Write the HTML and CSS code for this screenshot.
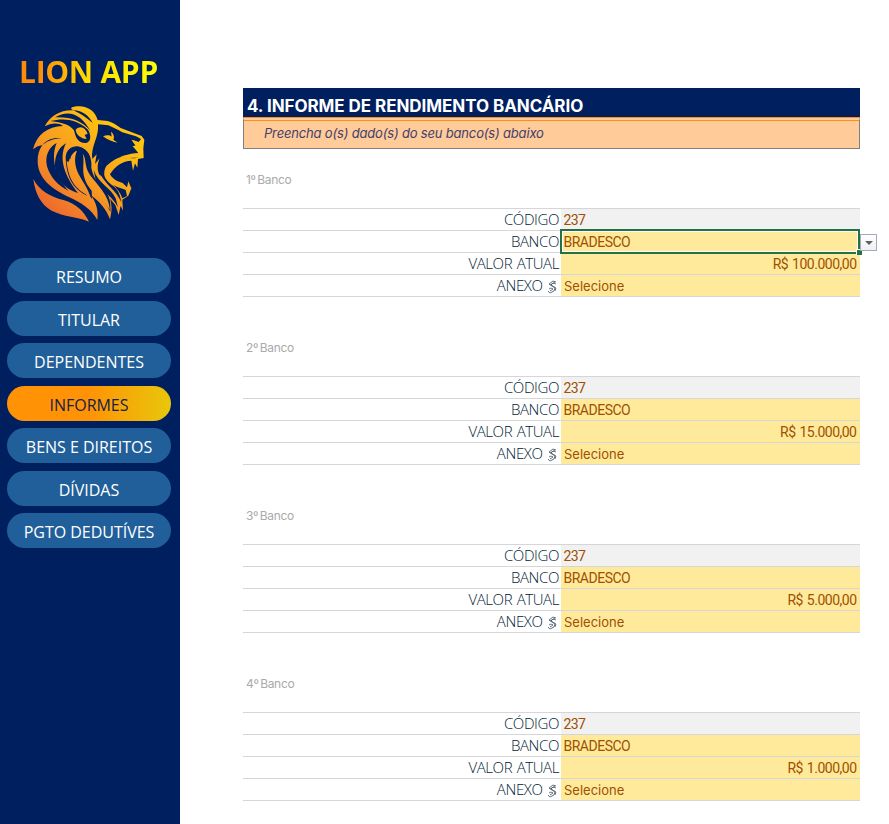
FILE: index.html
```html
<!DOCTYPE html>
<html lang="pt-BR">
<head>
<meta charset="utf-8">
<title>Lion App</title>
<link rel="stylesheet" href="styles.css">
</head>
<body>
<aside class="sidebar">
  <div class="brand">LION APP</div>
  <svg class="lion" viewBox="0 0 420 420" aria-hidden="true">
    <defs>
      <linearGradient id="gold" gradientUnits="userSpaceOnUse" x1="70" y1="350" x2="290" y2="110">
        <stop offset="0" stop-color="#ed6530"/><stop offset=".5" stop-color="#f79b22"/><stop offset="1" stop-color="#ffc20e"/>
      </linearGradient>
    </defs>
    <g fill="url(#gold)">
      <path d="M74 94C91 62 122 44 161 46C142 38 163 33 181 34C210 37 226 52 233 75L263 78C278 82 288 89 302 99L365 123L373 134L370 160L371 189L354 192L352 218L345 205L339 227L334 197C308 197 285 213 270 238C278 252 290 259 308 264L321 277L325 259L334 280L325 302L307 314L309 347L302 332L296 360L286 330L270 311C277 334 275 352 270 373C260 346 240 320 213 301C230 325 235 348 232 375C214 342 182 323 148 307C94 282 55 250 53 202C52 181 57 164 67 150Q50 153 39 163C50 119 83 94 129 93C112 81 91 86 74 94Z"/>
      <path d="M40 252C58 288 92 305 130 315C169 326 191 348 207 380C174 365 132 366 95 347C64 330 45 296 40 252Z"/>
    </g>
    <g fill="#001f5f">
      <path d="M105 67C145 43 183 56 211 107C187 78 152 65 105 67Z"/>
      <path d="M160 46C188 47 207 62 218 84C198 66 180 56 160 46Z"/>
      <path d="M91 78C129 69 170 71 204 104C216 125 211 141 198 144C174 145 167 128 162 106C148 87 119 81 91 78Z"/>
      <path d="M66 151C82 132 103 127 124 130C95 132 80 140 66 151Z"/>
      <path d="M110 144C86 156 74 184 81 214C90 247 117 274 145 287C107 244 91 189 110 144Z"/>
      <path d="M138 145C102 166 97 216 116 250C127 272 150 288 174 294C137 247 113 193 138 145Z"/>
      <path d="M137 187C139 163 155 153 173 154C205 160 217 187 214 219C220 249 235 266 252 282C270 302 273 326 271 350C259 324 235 308 215 284L216 312L204 295C194 277 178 264 170 246C150 216 158 202 149 190C143 214 150 230 159 245C171 268 190 285 201 302C169 286 139 260 137 187Z"/>
      <path d="M234 88L265 91L295 105L307 112L348 124L363 132L356 142L339 135L347 151L340 154L355 174C329 176 292 182 259 213C253 222 251 234 254 248L238 239C229 221 234 202 239 190L225 207L230 178L217 192C211 155 238 127 234 88Z"/>
      <path d="M247 210C245 236 256 257 280 273C294 284 301 300 304 322C290 287 254 266 241 237Z"/>
      <path d="M221 225C234 264 273 279 287 310L294 337C280 309 246 287 227 256Z"/>
      <path d="M290 188Q326 180 366 183L345 190Q317 187 298 192Z"/>
      <path d="M280 270C294 279 309 280 317 285L321 303L307 310C302 294 292 282 280 270Z"/>
    </g>
    <g fill="url(#gold)">
      <path d="M167 104C180 91 196 96 203 116L194 120L200 132C183 130 169 121 167 104Z"/>
      <path d="M140 198C145 204 150 199 153 184C160 172 165 168 171 167C161 190 165 215 176 238C188 260 203 281 211 304C180 292 145 266 140 198Z"/>
      <path d="M188 176C200 190 192 214 210 240C232 271 266 298 270 345C243 309 207 290 195 254C184 222 195 200 188 176Z"/>
      <path d="M249 124C260 119 269 120 275 125L273 110C283 118 283 128 280 134L293 143C277 140 261 134 249 124Z"/>
      <path d="M334 134L355 141L368 132L369 159L357 174L337 153L348 154Z"/>
      <path d="M257 226C269 201 292 184 332 179L364 181L369 188L343 188C303 187 278 204 264 238Z"/>
    </g>
  </svg>
  <nav class="menu">
    <a>RESUMO</a>
    <a>TITULAR</a>
    <a>DEPENDENTES</a>
    <a class="active">INFORMES</a>
    <a>BENS E DIREITOS</a>
    <a>DÍVIDAS</a>
    <a>PGTO DEDUTÍVES</a>
  </nav>
</aside>
<main class="sheet">
  <h1><span class="title">4. INFORME DE RENDIMENTO BANCÁRIO</span></h1>
  <p class="hint"><span>Preencha o(s) dado(s) do seu banco(s) abaixo</span></p>

  <section class="bank">
    <h2>1º Banco</h2>
    <dl>
      <dt>CÓDIGO</dt><dd class="code">237</dd>
      <dt>BANCO</dt><dd class="name selected">BRADESCO<i class="handle"></i><b class="dropdown"></b></dd>
      <dt>VALOR ATUAL</dt><dd class="money">R$ 100.000,00</dd>
      <dt>ANEXO <svg class="clip" viewBox="0 0 10 14"><path d="M9 2 6 1 2 4 8 8 7 11 3 13 1 11M9 4 6 3 4 5 9 8 8 11M2 9 4 8 6 9 3 11M8 2 3 5"/></svg></dt><dd class="pick">Selecione</dd>
    </dl>
  </section>

  <section class="bank">
    <h2>2º Banco</h2>
    <dl>
      <dt>CÓDIGO</dt><dd class="code">237</dd>
      <dt>BANCO</dt><dd class="name">BRADESCO</dd>
      <dt>VALOR ATUAL</dt><dd class="money">R$ 15.000,00</dd>
      <dt>ANEXO <svg class="clip" viewBox="0 0 10 14"><path d="M9 2 6 1 2 4 8 8 7 11 3 13 1 11M9 4 6 3 4 5 9 8 8 11M2 9 4 8 6 9 3 11M8 2 3 5"/></svg></dt><dd class="pick">Selecione</dd>
    </dl>
  </section>

  <section class="bank">
    <h2>3º Banco</h2>
    <dl>
      <dt>CÓDIGO</dt><dd class="code">237</dd>
      <dt>BANCO</dt><dd class="name">BRADESCO</dd>
      <dt>VALOR ATUAL</dt><dd class="money">R$ 5.000,00</dd>
      <dt>ANEXO <svg class="clip" viewBox="0 0 10 14"><path d="M9 2 6 1 2 4 8 8 7 11 3 13 1 11M9 4 6 3 4 5 9 8 8 11M2 9 4 8 6 9 3 11M8 2 3 5"/></svg></dt><dd class="pick">Selecione</dd>
    </dl>
  </section>

  <section class="bank">
    <h2>4º Banco</h2>
    <dl>
      <dt>CÓDIGO</dt><dd class="code">237</dd>
      <dt>BANCO</dt><dd class="name">BRADESCO</dd>
      <dt>VALOR ATUAL</dt><dd class="money">R$ 1.000,00</dd>
      <dt>ANEXO <svg class="clip" viewBox="0 0 10 14"><path d="M9 2 6 1 2 4 8 8 7 11 3 13 1 11M9 4 6 3 4 5 9 8 8 11M2 9 4 8 6 9 3 11M8 2 3 5"/></svg></dt><dd class="pick">Selecione</dd>
    </dl>
  </section>
</main>
</body>
</html>
```
FILE: styles.css
```css
* { box-sizing: border-box; }
body {
  margin: 0;
  display: flex;
  height: 824px;
  overflow: hidden;
  background: #fff;
  font-family: "Open Sans", sans-serif;
}
.sidebar {
  width: 180px;
  height: 824px;
  flex: none;
  background: #001f5f;
  display: flex;
  flex-direction: column;
}
.brand {
  margin: 52px 0 0 19px;
  width: 140px;
  height: 40px;
  line-height: 40px;
  font-size: 30px;
  font-weight: 700;
  letter-spacing: -0.3px;
  white-space: nowrap;
  background: linear-gradient(90deg, #ff8c05 15%, #ffdc00 50%, #ffff00);
  -webkit-background-clip: text;
  background-clip: text;
  color: transparent;
}
.lion { width: 140px; height: 140px; margin: 3px 0 0 20px; display: block; }
.menu {
  margin: 23px 9px 0 7px;
  display: flex;
  flex-direction: column;
  gap: 7.5px;
}
.menu a {
  height: 35px;
  border-radius: 18px;
  background: #215f9a;
  color: #fff;
  font-size: 16px;
  font-weight: 500;
  letter-spacing: -0.02px;
  line-height: 38px;
  text-align: center;
}
.menu .active {
  background: linear-gradient(90deg, #ff9305 50%, #e8c70b);
  color: #14204c;
}
.sheet { width: 617px; margin: 88px 0 0 63px; flex: none; }
h1 {
  margin: 0;
  height: 29px;
  padding-left: 4px;
  background: #001f5f;
  color: #fff;
  font: 700 17px/36px Inter, sans-serif;
  letter-spacing: -0.06px;
  white-space: nowrap;
}
.hint {
  margin: 0;
  height: 32px;
  padding-left: 20px;
  border: 1px solid #7f7f7f;
  border-top: 4px double #ff8c1a;
  background: #ffcb99;
  color: #44406c;
  font: italic 13px/25px Inter, sans-serif;
  letter-spacing: -0.18px;
}
.bank { height: 168px; padding-top: 20px; }
h2 {
  margin: 0;
  height: 39px;
  padding-left: 3px;
  color: #aaa;
  font: 400 12px/22px Inter, sans-serif;
  letter-spacing: -0.3px;
  word-spacing: -1.5px;
}
dl {
  margin: 0;
  display: grid;
  grid-template-columns: 318px 299px;
  grid-auto-rows: 22px;
  border-top: 1px solid #d6d6d6;
}
dt, dd {
  margin: 0;
  border-bottom: 1px solid #d6d6d6;
  white-space: nowrap;
}
dt {
  padding-right: 2px;
  text-align: right;
  color: #001a33;
  font: 300 15px/21px "Open Sans", sans-serif;
  letter-spacing: -0.4px;
  word-spacing: 1px;
}
dd {
  position: relative;
  padding: 0 3px;
  background: #ffea9c;
  color: #a05000;
  font: 400 14px/23px Roboto, sans-serif;
  letter-spacing: -0.5px;
}
.code { background: #f1f1f1; letter-spacing: -0.6px; }
.code, .name { padding-left: 2.500px; }
.money { text-align: right; word-spacing: 1px; padding-right: 3.500px; }
.pick { font: 400 13px/22px Inter, sans-serif; letter-spacing: 0; }
.clip {
  width: 10px;
  height: 14px;
  margin: 0 2px 0 0;
  vertical-align: -3px;
  fill: none;
  stroke: #435466;
  stroke-width: .8;
}
.selected { z-index: 1; }
.selected::before {
  content: "";
  position: absolute;
  inset: -2px 0 -2px -1px;
  border: 2px solid #217346;
  box-shadow: inset 0 0 0 1px #fff;
}
.handle {
  position: absolute;
  right: -2px;
  bottom: -3px;
  width: 6px;
  height: 6px;
  background: #217346;
  border: 1px solid #fff;
  border-right: 0;
  border-bottom: 0;
}
.dropdown {
  position: absolute;
  left: 299px;
  top: 3px;
  width: 17px;
  height: 17px;
  border: 1px solid #a3abb8;
  background: linear-gradient(#fff, #eef0f5);
}
.dropdown::after {
  content: "";
  position: absolute;
  left: 4px;
  top: 6px;
  border: 4px solid transparent;
  border-top-color: #606060;
  border-bottom: 0;
}
```
